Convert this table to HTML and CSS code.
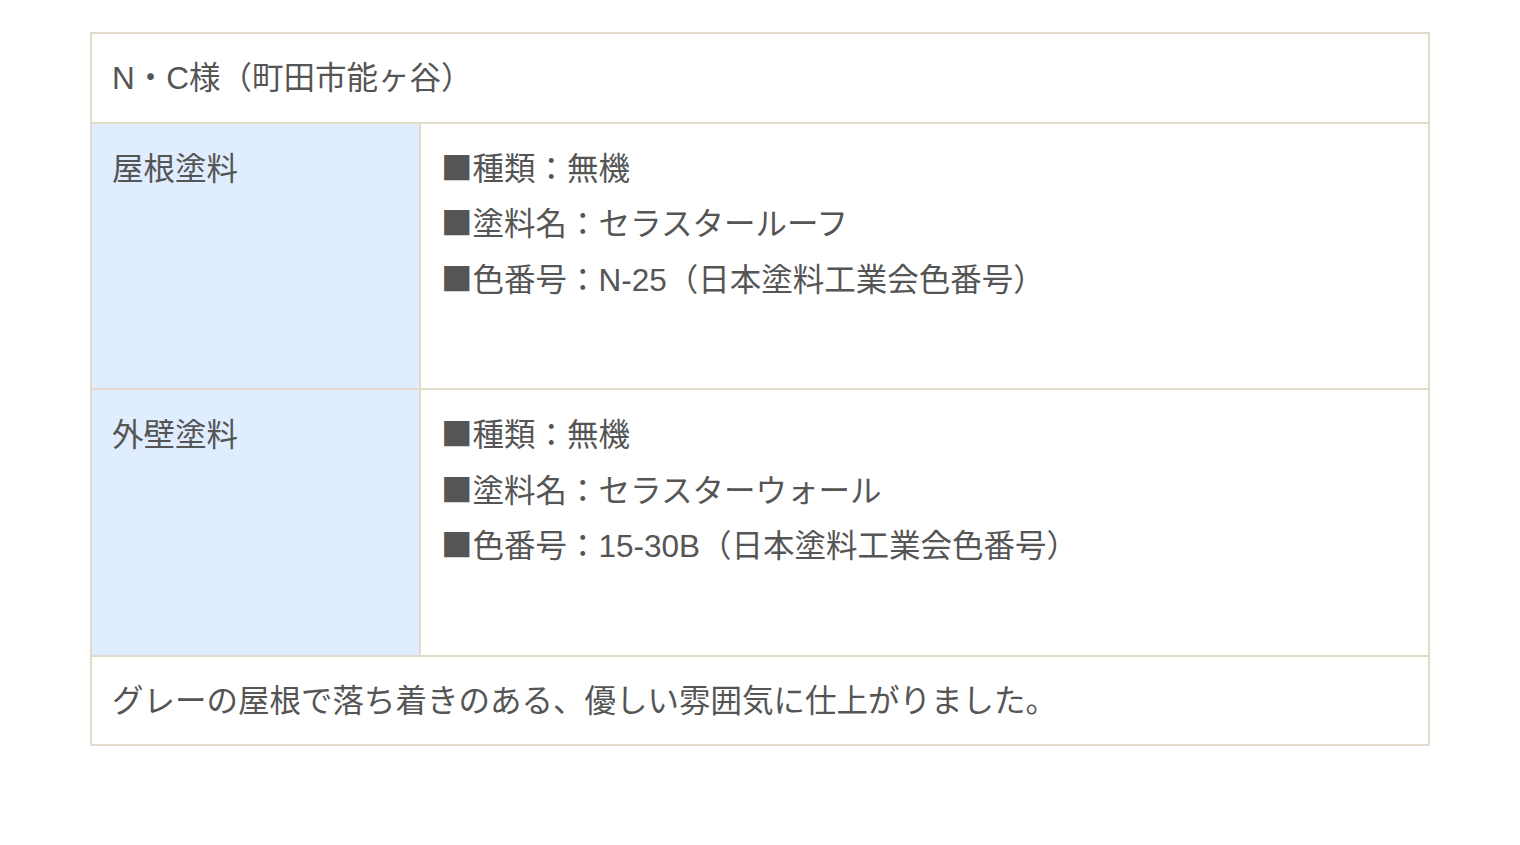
FILE: index.html
```html
<!DOCTYPE html>
<html lang="ja">
<head>
<meta charset="utf-8">
<title>施工事例</title>
<link rel="stylesheet" href="styles.css">
</head>
<body>
<div class="page">
  <table class="spec">
    <colgroup>
      <col class="col-label">
      <col class="col-detail">
    </colgroup>
    <tr>
      <td class="head" colspan="2">N・C様（町田市能ヶ谷）</td>
    </tr>
    <tr>
      <th class="label">屋根塗料</th>
      <td class="detail">
        <p class="line"><span class="sq">■</span>種類：無機</p>
        <p class="line"><span class="sq">■</span>塗料名：セラスタールーフ</p>
        <p class="line"><span class="sq">■</span>色番号：N-25（日本塗料工業会色番号）</p>
      </td>
    </tr>
    <tr>
      <th class="label">外壁塗料</th>
      <td class="detail">
        <p class="line"><span class="sq">■</span>種類：無機</p>
        <p class="line"><span class="sq">■</span>塗料名：セラスターウォール</p>
        <p class="line"><span class="sq">■</span>色番号：15-30B（日本塗料工業会色番号）</p>
      </td>
    </tr>
    <tr>
      <td class="foot" colspan="2">グレーの屋根で落ち着きのある、優しい雰囲気に仕上がりました。</td>
    </tr>
  </table>
</div>
</body>
</html>
```

FILE: styles.css
```css
html, body {
  margin: 0;
  padding: 0;
  background: #ffffff;
}
body {
  font-family: "Liberation Sans", "Noto Sans CJK JP", sans-serif;
  color: #555555;
  font-size: 31.5px;
  line-height: 55.5px;
}
.page {
  padding: 32px 90px 0 90px;
}
.spec {
  width: 1340px;
  border-collapse: collapse;
  table-layout: fixed;
}
.col-label {
  width: 329px;
}
.spec td, .spec th {
  border: 2px solid #e2dacb;
  text-align: left;
  vertical-align: top;
  font-weight: normal;
}
.head {
  padding: 17px 20px 15px 20px;
}
.foot {
  padding: 17px 20px 15px 20px;
}
.label {
  background: #dfedff;
  padding: 18px 20px 80px 20px;
}
.detail {
  padding: 18px 20px 80px 20px;
}
.line {
  margin: 0;
}
.sq {
  font-family: "Noto Sans CJK JP", sans-serif;
  line-height: 0;
}
```
